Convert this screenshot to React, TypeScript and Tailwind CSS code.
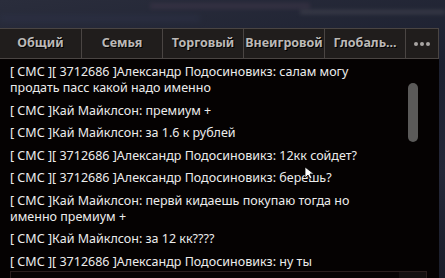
import React from "react";

const tabs = ["Общий", "Семья", "Торговый", "Внеигровой", "Глобаль..."];

const messages = [
  "[ СМС ][ 3712686 ]Александр Подосиновикз: салам могу продать пасс какой надо именно",
  "[ СМС ]Кай Майклсон: премиум +",
  "[ СМС ]Кай Майклсон: за 1.6 к рублей",
  "[ СМС ][ 3712686 ]Александр Подосиновикз: 12кк сойдет?",
  "[ СМС ][ 3712686 ]Александр Подосиновикз: берешь?",
  "[ СМС ]Кай Майклсон: первй кидаешь покупаю тогда но именно премиум +",
  "[ СМС ]Кай Майклсон: за 12 кк????",
  "[ СМС ][ 3712686 ]Александр Подосиновикз: ну ты",
];

export default function App() {
  return (
    <div className="relative w-[445px] h-[278px] overflow-hidden bg-[linear-gradient(170deg,#2a2d3c_0%,#1c2030_40%,#242738_70%,#1a1d2a_100%)] font-['Noto_Sans',sans-serif]">
      {/* blurred game background */}
      <div className="h-[28px] relative">
        <div className="absolute left-[150px] top-[3px] w-[160px] h-[6px] bg-[#3a3446] blur-[2px] opacity-70" />
        <div className="absolute left-[300px] top-[10px] w-[145px] h-[4px] bg-[#4a4a55] blur-[2px] opacity-60" />
        <div className="absolute left-[0px] top-[16px] w-[200px] h-[5px] bg-[#2e3348] blur-[3px] opacity-70" />
      </div>

      <div className="w-[439px] flex flex-col">
        {/* tabs */}
        <div className="flex h-[31px] bg-[#201d1c] border-y border-r border-[#4a4543]">
          {tabs.map((t, i) => (
            <div
              key={t}
              className={`w-[81px] flex items-center justify-center text-[12.5px] font-bold text-[#bcb9b7] [text-shadow:1px_1px_0_#000] ${i > 0 ? "border-l border-[#4a4543]" : ""}`}
            >
              {t}
            </div>
          ))}
          <div className="flex-1 flex items-center justify-center border-l border-[#4a4543] gap-[2px]">
            <span className="w-[4px] h-[4px] rounded-full bg-[#a8a5a3]" />
            <span className="w-[4px] h-[4px] rounded-full bg-[#a8a5a3]" />
            <span className="w-[4px] h-[4px] rounded-full bg-[#a8a5a3]" />
          </div>
        </div>

        {/* chat */}
        <div className="relative h-[219px] bg-[#050202] pl-[10px] pr-[49px] pt-[5px] flex flex-col gap-[6.5px]">
          {messages.map((m, i) => (
            <div key={i} className="text-[12.5px] leading-[16px] text-[#ececec]">
              {m}
            </div>
          ))}

          <div className="absolute left-[408px] top-[24px] w-[10px] h-[59px] rounded-full bg-[#5b5a59]" />

          <div className="absolute left-[10px] top-[212px] w-[417px] h-[10px] border border-[#2b1f1e] bg-[#080404] flex justify-end">
            <div className="w-[27px] h-full bg-[#141010]" />
          </div>

          <svg className="absolute left-[304px] top-[107px]" width="10" height="14" viewBox="0 0 10 14">
            <path d="M1 1 L1 12 L4 9 L6 13 L8 12 L6 8 L10 8 Z" fill="#fff" stroke="#000" strokeWidth="0.8" />
          </svg>
        </div>
      </div>
    </div>
  );
}
